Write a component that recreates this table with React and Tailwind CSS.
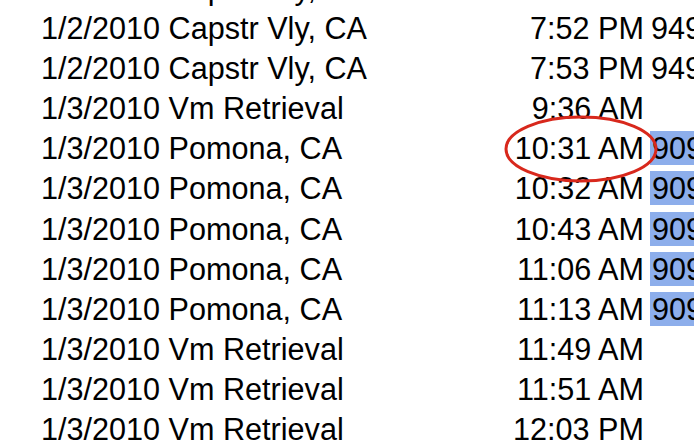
const rows = [
  { date: '1/2/2010', place: 'Capstr Vly, CA', time: '7:51 PM', num: '9495550142', hl: false },
  { date: '1/2/2010', place: 'Capstr Vly, CA', time: '7:52 PM', num: '9495550142', hl: false },
  { date: '1/2/2010', place: 'Capstr Vly, CA', time: '7:53 PM', num: '9495550142', hl: false },
  { date: '1/3/2010', place: 'Vm Retrieval', time: '9:36 AM', num: '', hl: false },
  { date: '1/3/2010', place: 'Pomona, CA', time: '10:31 AM', num: '9095550187', hl: true },
  { date: '1/3/2010', place: 'Pomona, CA', time: '10:32 AM', num: '9095550187', hl: true },
  { date: '1/3/2010', place: 'Pomona, CA', time: '10:43 AM', num: '9095550187', hl: true },
  { date: '1/3/2010', place: 'Pomona, CA', time: '11:06 AM', num: '9095550187', hl: true },
  { date: '1/3/2010', place: 'Pomona, CA', time: '11:13 AM', num: '9095550187', hl: true },
  { date: '1/3/2010', place: 'Vm Retrieval', time: '11:49 AM', num: '', hl: false },
  { date: '1/3/2010', place: 'Vm Retrieval', time: '11:51 AM', num: '', hl: false },
  { date: '1/3/2010', place: 'Vm Retrieval', time: '12:03 PM', num: '', hl: false },
];

export default function App() {
  return (
    <div className="relative w-[694px] h-[442px] overflow-hidden bg-white text-black font-['Liberation_Sans',Arial,sans-serif] text-[30.6px] leading-[40.1px] whitespace-nowrap">
      <div className="-mt-[32px]">
        {rows.map((r, i) => (
          <div key={i} className="flex h-[40.1px]">
            <div className="w-[644px] shrink-0 flex justify-between pl-[41px]">
              <span>{r.date} {r.place}</span>
              <span>{r.time}</span>
            </div>
            <div className="pl-[6px]">
              {r.num && (
                <span className={r.hl ? 'bg-[#8daeeb] pl-[2px]' : 'pl-[1px]'}>{r.num}</span>
              )}
            </div>
          </div>
        ))}
      </div>

      {/* red circle drawn around the 10:31 call */}
      <svg className="absolute left-0 top-0 pointer-events-none" width="694" height="442">
        <ellipse cx="581" cy="149" rx="75" ry="32" fill="none" stroke="#d8281c" strokeWidth="3" />
      </svg>
    </div>
  );
}
